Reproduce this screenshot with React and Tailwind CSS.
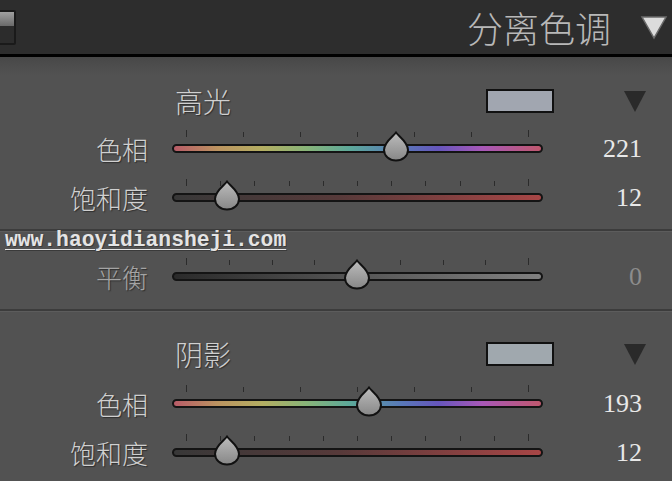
import React from "react";

const CJK = "font-['Noto_Sans_CJK_SC','Noto_Sans',sans-serif]";

const HUE_BAR =
  "bg-[linear-gradient(to_right,#b85c68_0%,#bc9460_12%,#b4ae62_24%,#88b478_36%,#5ca89a_48%,#5878b8_62%,#6656bc_72%,#a858b8_84%,#c0586e_100%)]";
const SAT_BAR = "bg-[linear-gradient(to_right,#383838_0%,#573a3a_45%,#a84646_100%)]";
const BAL_BAR = "bg-[linear-gradient(to_right,#2a2a2a_0%,#565656_50%,#808080_100%)]";

// thumb travel runs between the first and last tick
const START = 14;
const SPAN = 342;

function Thumb({ x }) {
  return (
    <svg
      className="absolute top-[-13px]"
      style={{ left: x - 14 }}
      width="28"
      height="31"
      viewBox="0 0 28 31"
    >
      <defs>
        <linearGradient id="thumbFill" x1="0" y1="0" x2="0" y2="1">
          <stop offset="0" stopColor="#bcbcbc" />
          <stop offset="1" stopColor="#878787" />
        </linearGradient>
      </defs>
      <path
        d="M14 1.5 C17 5.5 26 11 26 19 A12 10.5 0 0 1 2 19 C2 11 11 5.5 14 1.5 Z"
        fill="url(#thumbFill)"
        stroke="#111"
        strokeWidth="2"
      />
    </svg>
  );
}

function Slider({ ticks, value, bar }) {
  const step = SPAN / (ticks - 1);
  return (
    <div className="relative w-[371px] h-[9px]">
      {Array.from({ length: ticks }).map((_, i) => (
        <div
          key={i}
          className={`absolute w-px bg-[#2b2b2b] ${
            i === 0 || i === ticks - 1 ? "top-[-14px] h-[7px]" : "top-[-12px] h-[5px]"
          }`}
          style={{ left: START + i * step }}
        />
      ))}
      <div className={`h-full rounded-full border-2 border-[#141414] ${bar}`} />
      <Thumb x={START + value * SPAN} />
    </div>
  );
}

function Row({ label, value, ticks, pos, bar, dim }) {
  return (
    <div className="h-[49px] flex items-center">
      <div
        className={`w-[148px] text-right text-[26px] leading-none font-light ${CJK} [text-shadow:1px_1px_1px_#2e2e2e] ${
          dim ? "text-[#a4a4a4]" : "text-[#d0d0d0]"
        }`}
      >
        {label}
      </div>
      <div className="ml-[24px]">
        <Slider ticks={ticks} value={pos} bar={bar} />
      </div>
      <div
        className={`w-[99px] text-right text-[26px] leading-none font-['Liberation_Serif',serif] ${
          dim ? "text-[#8c8c8c]" : "text-[#e8e8e8]"
        }`}
      >
        {value}
      </div>
    </div>
  );
}

function GroupHead({ label, swatch, tall }) {
  return (
    <div className={`flex items-center ${tall ? "h-[50px]" : "h-[46px]"}`}>
      <div className="w-[175px]" />
      <div className={`text-[28px] leading-none font-light text-[#d0d0d0] ${CJK} [text-shadow:1px_1px_1px_#2e2e2e]`}>
        {label}
      </div>
      <div className="flex-1" />
      <div className={`w-[68px] h-[24px] border-2 border-[#111] ${swatch}`} />
      <div className="ml-[70px] w-0 h-0 border-l-[11px] border-r-[11px] border-t-[21px] border-l-transparent border-r-transparent border-t-[#2a2a2a]" />
      <div className="w-[26px]" />
    </div>
  );
}

function Divider() {
  return (
    <div>
      <div className="h-[2px] bg-[#3c3c3c]" />
      <div className="h-px bg-[#5c5c5c]" />
    </div>
  );
}

export default function App() {
  return (
    <div className="relative w-[672px] h-[481px] overflow-hidden bg-[#525252]">
      {/* panel header */}
      <div className="h-[54px] bg-[#2d2d2d] flex items-center">
        <div className="-ml-[10px] w-[26px] h-[35px] border-2 border-[#1a1a1a] rounded-[2px] flex flex-col overflow-hidden">
          <div className="h-[14px] bg-[linear-gradient(to_bottom,#a0a0a0,#6a6a6a)]" />
          <div className="flex-1 bg-[#2c2c2c]" />
        </div>
        <div className="flex-1" />
        <div className={`text-[36px] leading-none font-light text-[#b8b8b8] ${CJK}`}>分离色调</div>
        <svg className="ml-[29px] mr-[4px]" width="28" height="25" viewBox="0 0 28 25">
          <path d="M2 2 H26 L14 23 Z" fill="#dcdcdc" stroke="#6a6a6a" strokeWidth="1.5" />
        </svg>
      </div>
      <div className="h-[3px] bg-black" />

      {/* highlights */}
      <div className="h-[172px] pt-[21px] bg-[linear-gradient(to_bottom,#484848_0px,#525252_18px)]">
        <GroupHead label="高光" swatch="bg-[#a1a6b0]" />
        <Row label="色相" value="221" ticks={7} pos={221 / 360} bar={HUE_BAR} />
        <Row label="饱和度" value="12" ticks={11} pos={0.12} bar={SAT_BAR} />
      </div>
      <Divider />

      {/* balance */}
      <div className="h-[77px] pt-[20px]">
        <Row label="平衡" value="0" ticks={9} pos={0.5} bar={BAL_BAR} dim />
      </div>
      <Divider />

      {/* shadows */}
      <div className="pt-[17px]">
        <GroupHead label="阴影" swatch="bg-[#a0a8ae]" tall />
        <Row label="色相" value="193" ticks={7} pos={193 / 360} bar={HUE_BAR} />
        <Row label="饱和度" value="12" ticks={11} pos={0.12} bar={SAT_BAR} />
      </div>

      {/* site watermark */}
      <div className="absolute left-[5px] top-[229px] text-[21.3px] leading-[22px] font-bold font-['Liberation_Mono',monospace] text-[#e4e4e4] underline underline-offset-[3px] decoration-1 [text-shadow:1px_1px_0_#3a3a3a]">
        www.haoyidiansheji.com
      </div>
    </div>
  );
}
